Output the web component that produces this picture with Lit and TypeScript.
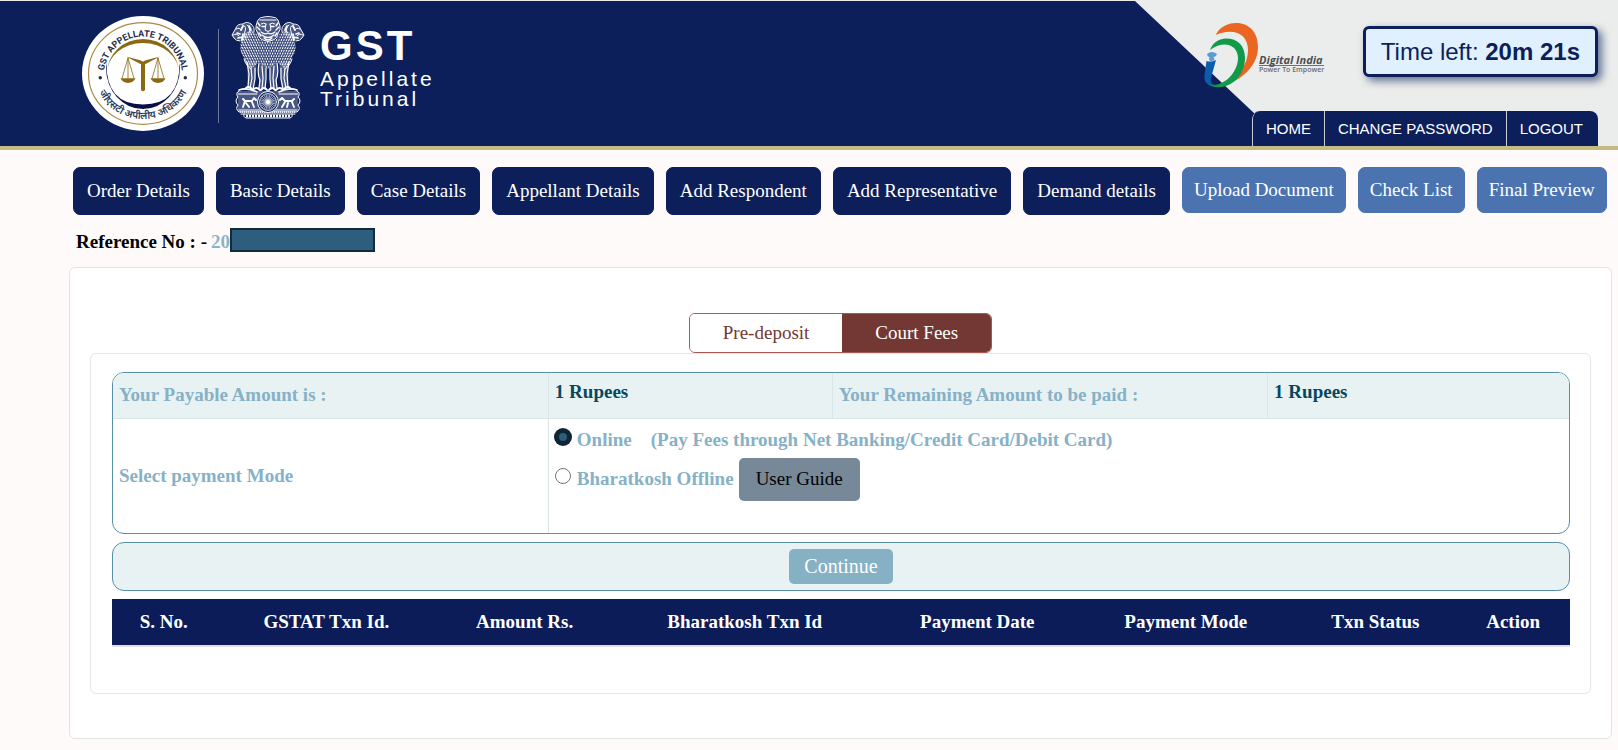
import { LitElement, html, svg, css } from "lit";
import { customElement, state } from "lit/decorators.js";

const steps = [
  "Order Details",
  "Basic Details",
  "Case Details",
  "Appellant Details",
  "Add Respondent",
  "Add Representative",
  "Demand details",
];
const laterSteps = ["Upload Document", "Check List", "Final Preview"];

const columns = [
  { title: "S. No.", width: 7.1 },
  { title: "GSTAT Txn Id.", width: 15.2 },
  { title: "Amount Rs.", width: 12 },
  { title: "Bharatkosh Txn Id", width: 18.2 },
  { title: "Payment Date", width: 13.7 },
  { title: "Payment Mode", width: 14.9 },
  { title: "Txn Status", width: 11.1 },
  { title: "Action", width: 7.8 },
];

@customElement("gst-seal")
export class GstSeal extends LitElement {
  static styles = css`
    :host { display: block; width: 122px; height: 115px; }
    svg { display: block; }
    .latin { font: 700 9px Roboto, "Liberation Sans", sans-serif; fill: #1d2c4d; }
    .hindi { font: 600 10px "Noto Sans Devanagari", "Noto Sans", sans-serif; fill: #2b3956; }
  `;
  render() {
    return html`<svg width="122" height="115" viewBox="0 0 122 115" role="img" aria-label="GST Appellate Tribunal seal">
      <defs>
        <path id="top" d="M21.5 61 A39.5 40.5 0 0 1 100.5 61" />
        <path id="bottom" d="M13 57.5 A48 45.5 0 0 0 109 57.5" />
      </defs>
      <ellipse cx="61" cy="57.5" rx="61" ry="57.5" fill="#fff" />
      <ellipse cx="61" cy="57.5" rx="54.5" ry="50.8" fill="none" stroke="#a98a45" stroke-width="1.2" />
      <path fill="#8b6914" d="M25 57 A36 34 0 0 1 97 57 A36 30 0 0 0 25 57Z" />
      <path fill="#0a1045" d="M24.500 47 Q24 50 24 52 A37 41 0 0 0 98 52 Q98 50 97.500 47 Q98 88.500 61 88.500 Q24 88.500 24.500 47Z" />
      <g fill="#8b6914">
        <path d="M44 40.500 L59 44.500 Q61 46.500 63 44.500 L78 40.500 L63 48.300 V74 Q61 76.500 59 74 V48.300Z" />
        <path d="M38.500 62.300 H53.500 Q51.500 66.900 46 66.900 Q40.500 66.900 38.500 62.300Z" />
        <path d="M68.500 62.300 H83.500 Q81.500 66.900 76 66.900 Q70.500 66.900 68.500 62.300Z" />
      </g>
      <path fill="none" stroke="#8b6914" stroke-width="0.8"
        d="M46 42 L40 62.500 M46 42 L52 62.500 M46 42 V62.500 M76 42 L70 62.500 M76 42 L82 62.500 M76 42 V62.500" />
      <circle cx="18.300" cy="61.700" r="1.700" fill="#1d2c4d" />
      <circle cx="103.300" cy="61.700" r="1.700" fill="#1d2c4d" />
      <text class="latin" text-anchor="middle"><textPath href="#top" startOffset="50%">GST APPELLATE TRIBUNAL</textPath></text>
      <text class="hindi" text-anchor="middle"><textPath href="#bottom" startOffset="50%">जीएसटी अपीलीय अधिकरण</textPath></text>
    </svg>`;
  }
}

@customElement("state-emblem")
export class StateEmblem extends LitElement {
  static styles = css`
    :host { display: block; width: 74px; height: 103px; }
    svg { display: block; }
  `;
  // Short tufts of the three manes, laid out in offset rows.
  private tufts() {
    const marks = [];
    for (let row = 0; row < 15; row++) {
      for (let col = 0; col < 30; col++) {
        const x = col * 2.6 + (row % 2 ? 1.3 : 0);
        const y = 15 + row * 2.7;
        const lean = (x - 37) / 20;
        marks.push(svg`<path d="M${x} ${y} q${0.6 - lean} 0.9 ${-lean} 1.7" />`);
      }
    }
    return marks;
  }
  render() {
    const spokes = Array.from({ length: 12 }, (_, i) => i * 15);
    return html`<svg width="74" height="103" viewBox="0 0 74 103" role="img" aria-label="State Emblem of India">
      <defs>
        <clipPath id="mane">
          <path d="M10 26 Q9 17 20 15 L25 17 Q28 26 37 26 Q46 26 49 17 L54 15 Q65 17 64 26 Q66 36 61 41 Q59 51 53 52 L46 46 L37 53 L28 46 L21 52 Q15 51 13 41 Q8 36 10 26Z" />
        </clipPath>
      </defs>
      <g fill="#fff" opacity="0.25">
        <path d="M27 4 Q37 -1 47 4 L49 16 Q46 25 37 26 Q28 25 25 16Z" />
        <path d="M20 8 Q10 6 5 12 L1 19 Q5 25 12 25 L23 17Z M54 8 Q64 6 69 12 L73 19 Q69 25 62 25 L51 17Z" />
        <path d="M16 46 H26 L23 73 H17Z M28 47 H35 L34 73 H28Z M39 47 H46 L46 73 H40Z M48 46 H58 L57 73 H51Z" />
        <path d="M7 75 H67 V96 H7Z" />
      </g>
      <g clip-path="url(#mane)">
        <rect width="74" height="60" fill="#fff" opacity="0.2" />
        <g fill="none" stroke="#fff" stroke-width="1.1">${this.tufts()}</g>
      </g>
      <g fill="none" stroke="#fff" stroke-width="1" stroke-linecap="round" stroke-linejoin="round">
        <path d="M27 4 Q29 1 33 1 Q37 0 41 1 Q45 1 47 4 L49 10 Q50 14 47 17 Q46 23 42 24 Q37 27 32 24 Q28 23 27 17 Q24 14 25 10Z" />
        <path d="M29 4 H45 M30 8 Q33 6 35 8 M39 8 Q41 6 44 8 M35 8 L34 14 Q37 17 40 14 L39 8" />
        <path d="M31 10.500 h3 M40 10.500 h3 M30 16 Q34 19 37 17 Q40 19 44 16 M31 19 Q37 24 43 19 M33 22 Q37 26 41 22" stroke-width="1.300" />
        <path d="M27 7 L29 10 M26 11 L29 14 M28 17 L30 20 M47 7 L45 10 M48 11 L45 14 M46 17 L44 20" stroke-width="1.400" />
        <path d="M20 8 Q16 5 12 8 Q6 8 5 12 L1 19 L3 22 Q5 25 9 25 M5 13 Q9 11 10 14 M2 19 Q6 17 8 20 M12 9 Q16 11 14 15 Q12 19 15 22 M20 8 Q24 11 23 16 M16 9 Q20 12 18 17" />
        <path d="M54 8 Q58 5 62 8 Q68 8 69 12 L73 19 L71 22 Q69 25 65 25 M69 13 Q65 11 64 14 M72 19 Q68 17 66 20 M62 9 Q58 11 60 15 Q62 19 59 22 M54 8 Q50 11 51 16 M58 9 Q54 12 56 17" />
        <path stroke-width="1.700" d="M12 10 L10 14 M6 17 L9 18 M7 22 L12 21 M18 10 L20 14 M12 18 L11 24 M62 10 L64 14 M68 17 L65 18 M67 22 L62 21 M56 10 L54 14 M62 18 L63 24" />
        <path d="M13 43 Q15 50 20 53 M61 43 Q59 50 54 53" />
        <path d="M16 46 L18 58 L17 71 M20 52 L21 62 L19 72 M24 52 L24 63 L22 73 M28 47 Q26 58 29 64 L28 72 M31 50 L32 62 L31 73 M35 52 L35 63 L34 73 M39 52 L39 63 L40 73 M43 50 L42 62 L43 73 M46 47 Q48 58 45 64 L46 72 M50 52 L50 63 L52 73 M54 52 L53 62 L55 72 M58 46 L56 58 L57 71" stroke-width="1.200" />
        <path d="M14 73 Q17 69 21 73 M22 74 Q25 70 29 74 M30 74 Q33 70 36 74 M38 74 Q41 70 44 74 M45 74 Q49 70 52 74 M53 73 Q57 69 60 73" stroke-width="2" />
        <path d="M8 74 Q16 71 26 76 M48 76 Q58 71 66 74" stroke-width="1.600" />
        <path d="M7 78 H26 M48 78 H67" />
        <path d="M8 75 Q4 77 7 81 Q3 85 7 89 Q4 93 8 96 H66 Q70 93 67 89 Q71 85 67 81 Q70 77 66 75" />
        <path d="M8 94 H66 M10 98 H64 M13 98 Q12 101 15 102 H59 Q62 101 61 98" />
        <path d="M12 91 L14 85 L12 83 M14 85 L21 85 L23 82 L25 84 M21 86 L23 91 M15 87 L18 91 M49 84 L51 82 L54 85 L61 85 L63 83 M61 86 L63 91 M54 86 L51 91 M57 87 L56 91" stroke-width="1.900" />
        <path d="M15 100 H59" stroke-width="2.400" stroke-dasharray="2 1" stroke-linecap="butt" />
        <path d="M9 96 H65" stroke-width="1.600" stroke-dasharray="1 1" stroke-linecap="butt" />
        <circle cx="37" cy="86" r="10.500" fill="#0c1f5b" />
        <circle cx="37" cy="86" r="8.500" stroke-width="0.700" />
        <circle cx="37" cy="86" r="1.500" fill="#fff" />
      </g>
      <g stroke="#fff" stroke-width="0.6">
        ${spokes.map((a) => svg`<path d="M28.500 86 H45.500" transform="rotate(${a} 37 86)" />`)}
      </g>
    </svg>`;
  }
}

@customElement("digital-india-logo")
export class DigitalIndiaLogo extends LitElement {
  static styles = css`
    :host { display: block; width: 122px; height: 65px; }
    svg { display: block; }
    .name { font: italic 700 11px "Open Sans", "Noto Sans", sans-serif; fill: #4e4e50; }
    .motto { font: 600 7px "Open Sans", "Noto Sans", sans-serif; fill: #6b6b6d; }
  `;
  render() {
    return html`<svg width="122" height="65" viewBox="0 0 122 65" role="img" aria-label="Digital India, Power To Empower">
      <path fill="#ea6621" d="M11.700 12 C16 3 25 0 32 0 C46 0 54 10 54 24 C54 43 37 58 19 62.500 C34 54 44 42 44 27 C44 11 30 4 11.700 12Z" />
      <path fill="#119a48" d="M6 27 C9 19 16 15.500 22 15.500 C34 15.500 41 23 41 35 C41 51 29 64.300 14 64.300 C6 64.300 1 60 0.500 54 C3 60 8 62.500 13 61.500 C25 59 34 46 34 35 C34 23 21 16 6 27Z" />
      <path fill="#0b5cab" d="M2.500 38 Q7 39.500 12 37 L7 55 C6 59 8 62 12.500 62.500 C5 63.500 -0.500 60 0.500 52Z" />
      <path fill="#5a9bd5" d="M3 31 Q8 27 13 31 Q12 34 9.500 34 Q12 38 7.500 38 Q4 38 5.500 34 Q3.500 34 3 31Z" />
      <text class="name" x="55" y="41">Digital India</text>
      <path stroke="#4e4e50" stroke-width="0.8" d="M55 42.500 H120" />
      <text class="motto" x="55" y="49">Power To Empower</text>
    </svg>`;
  }
}

@customElement("app-root")
export class AppRoot extends LitElement {
  @state() private mode = "online";

  static styles = css`
    :host {
      display: block;
      min-height: 100vh;
      box-sizing: border-box;
      background: #fffafa;
      font-family: "Liberation Serif", "Times New Roman", serif;
      font-size: 19px;
      line-height: 22px;
      color: #000;
    }
    * { box-sizing: border-box; }
    button { font: inherit; font-weight: 400; cursor: pointer; white-space: nowrap; }

    .top {
      display: flex;
      height: 150px;
      background: #0c1f5b;
      border-top: 1px solid #e8ebea;
      border-bottom: 4px solid #c5bb82;
      font-family: "Liberation Sans", Arial, sans-serif;
    }
    .brand { flex: 1; display: flex; align-items: flex-start; padding: 15px 0 0 82px; color: #fff; }
    .rule { width: 1px; height: 94px; margin: 13px 12px 0 14px; background: #6c769b; }
    .brand-name { margin: 7px 0 0 15px; letter-spacing: 3px; }
    .short { font-size: 42px; line-height: 46px; font-weight: 700; }
    .long { font-size: 21px; line-height: 20px; }
    .corner {
      position: relative;
      flex: 0 0 483px;
      display: flex;
      flex-direction: column;
      justify-content: space-between;
      align-items: flex-end;
      padding-right: 20px;
    }
    .corner::before {
      content: "";
      position: absolute;
      inset: 0;
      background: #ebedec;
      clip-path: polygon(0 0, 100% 0, 100% 100%, 154px 100%);
    }
    .status { position: relative; display: flex; align-items: flex-start; gap: 37px; padding-top: 22px; }
    .timer {
      margin-top: 3px;
      padding: 8px 15px;
      border: 3px solid #0c1f5b;
      border-radius: 6px;
      background: #e0f0ff;
      box-shadow: 4px 4px 8px rgba(12, 31, 91, 0.6);
      color: #0c1f5b;
      font-size: 24px;
      line-height: 29px;
      white-space: nowrap;
    }
    .links {
      position: relative;
      display: flex;
      padding-right: 2px;
      border-radius: 8px 8px 0 0;
      background: #0c1f5b;
      overflow: hidden;
    }
    .links a {
      padding: 0 13px;
      border-left: 1px solid #c8ccd9;
      color: #fff;
      font-size: 15px;
      line-height: 35px;
      text-decoration: none;
    }
    .links a:first-child { border-top-left-radius: 8px; }

    .steps { display: flex; align-items: flex-start; gap: 12px; padding: 17px 10px 0 73px; }
    .step { height: 48px; padding: 0 13px; border: 1px solid #0c1f5b; border-radius: 7px; background: #0c1f5b; color: #fff; }
    .step.later { height: 46px; padding: 0 11px; border-color: #4a73b0; background: #4a73b0; }

    .reference { display: flex; align-items: flex-start; margin: 13px 0 0 76px; font-weight: 700; line-height: 27px; }
    .reference .year { margin-left: 4px; color: #8ab4c8; }
    .masked { width: 145px; height: 24px; border: 2px solid #122b3d; background: #2f5d7e; }

    .card { margin: 12px 6px 0 69px; padding: 45px 20px 44px; border: 1px solid #e1e3e5; border-radius: 6px; background: #fff; }
    .tabs { display: flex; width: max-content; margin: 0 auto; border: 1px solid #a9574f; border-radius: 6px; overflow: hidden; }
    .tab { height: 38px; padding: 0 33px; border: 0; background: #fff; color: #733833; }
    .tab.active { background: #733833; color: #fff; }
    .panel { padding: 18px 20px 46px 21px; border: 1px solid #e3e5e7; border-radius: 6px; }

    .frame { border: 1px solid #5890aa; border-radius: 12px; overflow: hidden; }
    .amounts { width: 100%; table-layout: fixed; border-collapse: collapse; }
    .amounts th, .amounts td { padding: 0 6px; border-left: 1px solid #d8e6e7; text-align: left; font-weight: 700; }
    .amounts tr > :first-child { border-left: 0; }
    .amounts th { color: #86b1c6; }
    .summary { height: 45px; background: #e8f2f3; border-bottom: 1px solid #d8e6e7; }
    .summary td { padding-top: 8px; vertical-align: top; color: #07485f; }
    .choice { height: 115px; }
    .choice td { padding-top: 10px; vertical-align: top; }
    .c1 { width: 29.9%; }
    .c2 { width: 19.5%; }
    .c3 { width: 29.9%; }
    .option { display: flex; align-items: flex-start; gap: 6px; width: max-content; color: #86b1c6; }
    .hint { margin-left: 13px; }
    .offline { display: flex; align-items: center; gap: 5px; margin-top: 7px; }
    .option input {
      appearance: none;
      width: 16px;
      height: 16px;
      margin: 0;
      border: 1px solid #767676;
      border-radius: 50%;
      background: #fff;
    }
    .option input:checked { border: 4px solid #0e2636; background: #2f5d7e; box-shadow: 0 0 0 1px #0e2636; }
    .guide { height: 43px; padding: 0 17px; border: 0; border-radius: 5px; background: #778899; color: #000; }

    .submit { display: flex; justify-content: center; margin: 8px 0; padding: 6px 0; background: #e8f2f3; }
    .continue { height: 35px; padding: 0 15px 2px; border: 0; border-radius: 5px; background: #86b1c5; color: #fff; font-size: 20px; }

    .transactions { width: 100%; table-layout: fixed; border-collapse: separate; border-spacing: 0; border-bottom: 2px solid #e0e0e4; }
    .transactions th { height: 46px; padding: 0; background: #0b1c58; color: #fff; text-align: center; white-space: nowrap; }
  `;

  private pick(mode: string) {
    this.mode = mode;
  }

  render() {
    return html`
      <header class="top">
        <div class="brand">
          <gst-seal></gst-seal>
          <div class="rule"></div>
          <state-emblem></state-emblem>
          <div class="brand-name">
            <div class="short">GST</div>
            <div class="long">Appellate</div>
            <div class="long">Tribunal</div>
          </div>
        </div>
        <div class="corner">
          <div class="status">
            <digital-india-logo></digital-india-logo>
            <div class="timer">Time left: <b>20m 21s</b></div>
          </div>
          <nav class="links">
            <a href="#home">HOME</a>
            <a href="#password">CHANGE PASSWORD</a>
            <a href="#logout">LOGOUT</a>
          </nav>
        </div>
      </header>
      <main>
        <nav class="steps">
          ${steps.map((s) => html`<button class="step">${s}</button>`)}
          ${laterSteps.map((s) => html`<button class="step later">${s}</button>`)}
        </nav>
        <div class="reference">
          <span>Reference No : -</span><span class="year">20</span><span class="masked"></span>
        </div>
        <section class="card">
          <div class="tabs">
            <button class="tab">Pre-deposit</button>
            <button class="tab active">Court Fees</button>
          </div>
          <div class="panel">
            <div class="frame">
              <table class="amounts">
                <colgroup><col class="c1" /><col class="c2" /><col class="c3" /><col /></colgroup>
                <tr class="summary">
                  <th scope="row">Your Payable Amount is :</th>
                  <td>1 Rupees</td>
                  <th scope="row">Your Remaining Amount to be paid :</th>
                  <td>1 Rupees</td>
                </tr>
                <tr class="choice">
                  <th scope="row">Select payment Mode</th>
                  <td colspan="3">
                    <label class="option">
                      <input type="radio" name="mode" .checked=${this.mode === "online"} @change=${() => this.pick("online")} />
                      <span>Online</span>
                      <span class="hint">(Pay Fees through Net Banking/Credit Card/Debit Card)</span>
                    </label>
                    <div class="offline">
                      <label class="option">
                        <input type="radio" name="mode" .checked=${this.mode === "offline"} @change=${() => this.pick("offline")} />
                        <span>Bharatkosh Offline</span>
                      </label>
                      <button class="guide">User Guide</button>
                    </div>
                  </td>
                </tr>
              </table>
            </div>
            <div class="frame submit"><button class="continue">Continue</button></div>
            <table class="transactions">
              <colgroup>${columns.map((c) => html`<col style="width:${c.width}%" />`)}</colgroup>
              <thead><tr>${columns.map((c) => html`<th scope="col">${c.title}</th>`)}</tr></thead>
            </table>
          </div>
        </section>
      </main>
    `;
  }
}
